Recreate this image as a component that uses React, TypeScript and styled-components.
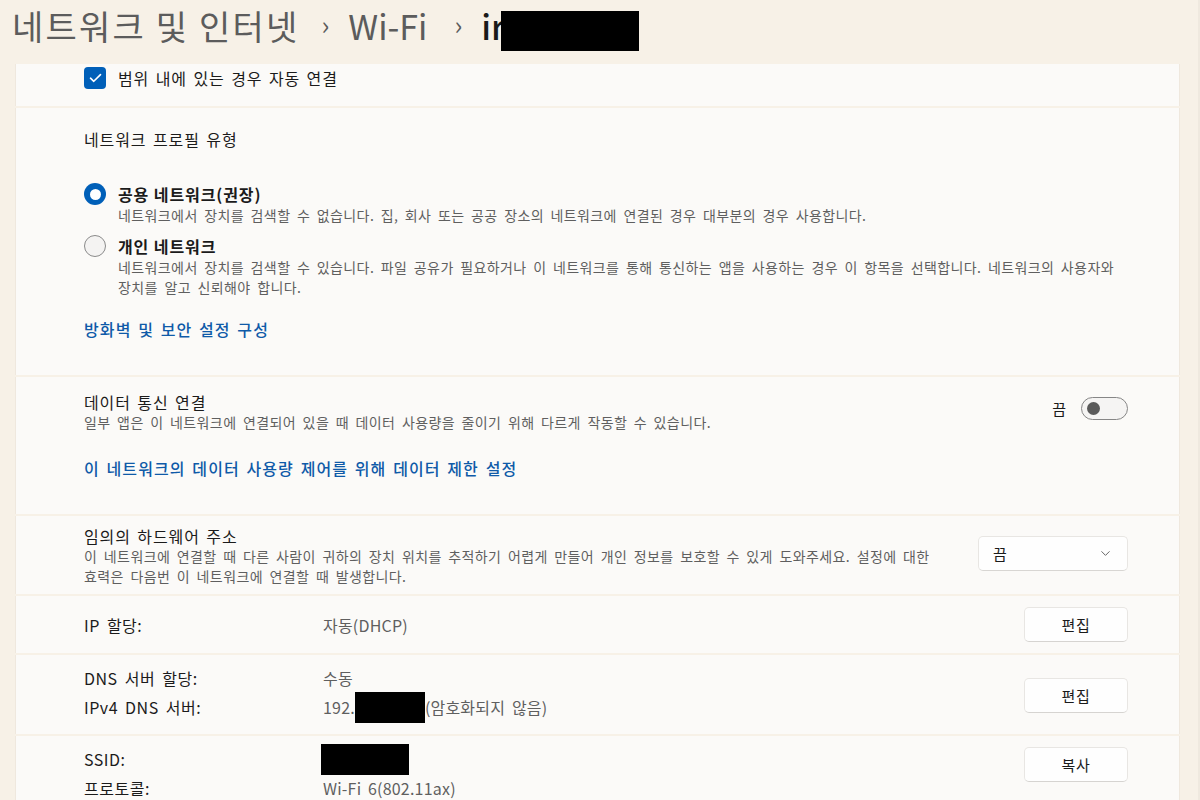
import React from 'react';
import styled, { createGlobalStyle } from 'styled-components';
import { ChevronDown } from 'lucide-react';

// 전역 스타일
const GlobalStyle = createGlobalStyle`
  html, body {
    margin: 0;
    padding: 0;
    background: #f7f1e7;
  }
  body {
    font-family: "Noto Sans CJK KR", "Noto Sans", "Liberation Sans", sans-serif;
    color: #1b1b1b;
  }
`;

const Page = styled.div`
  width: 1200px;
  height: 800px;
  overflow: hidden;
  background: #f7f1e7;
  box-shadow: inset -2px 0 0 #efe9df;
`;

const Header = styled.header`
  height: 64px;
  display: flex;
  align-items: center;
  padding-left: 12px;
  padding-bottom: 14px;
  box-sizing: border-box;
`;

const Crumb = styled.span<{ $current?: boolean; $ls?: number }>`
  font-size: 34px;
  letter-spacing: ${p => p.$ls ?? 0}px;
  color: ${p => (p.$current ? '#1a1a1a' : '#5c5c5c')};
  font-weight: ${p => (p.$current ? 500 : 400)};
  white-space: nowrap;
`;

const CrumbSep = styled.span<{ $ml: number }>`
  font-size: 26px;
  color: #5c5c5c;
  margin: 0 19px 0 ${p => p.$ml}px;
  position: relative;
  top: -2px;
`;

const Redact = styled.span<{ $w: number; $h: number }>`
  display: inline-block;
  width: ${p => p.$w}px;
  height: ${p => p.$h}px;
  background: #000;
  vertical-align: middle;
  flex-shrink: 0;
`;

// 제목 옆의 가림 상자 (제목보다 조금 아래)
const TitleRedact = styled(Redact)`
  margin: 12px 0 0 -4px;
`;

const Card = styled.div`
  margin: 0 20px 0 15px;
  display: flex;
  flex-direction: column;
  gap: 2px;
`;

const Section = styled.section<{ $h: number; $pt?: number }>`
  background: #fbfaf8;
  height: ${p => p.$h}px;
  padding: ${p => p.$pt ?? 0}px 52px 0 69px;
  box-sizing: border-box;
  box-shadow: inset 1px 0 0 #efe8de, inset -1px 0 0 #efe8de;
`;

const CheckRow = styled.label`
  display: flex;
  align-items: center;
  gap: 12px;
  font-size: 16px;
  letter-spacing: 0.9px;
  word-spacing: 2px;
`;

const CheckBox = styled.span`
  width: 22px;
  height: 22px;
  border-radius: 4px;
  background: #005fb8;
  display: flex;
  align-items: center;
  justify-content: center;
`;

const Heading = styled.div`
  font-size: 16px;
  letter-spacing: 0.9px;
  word-spacing: 2px;
  line-height: 20px;
`;

const Desc = styled.div`
  font-size: 14px;
  letter-spacing: 0.4px;
  word-spacing: 3px;
  line-height: 20px;
  color: #5f5f5f;
  word-break: keep-all;
`;

const RadioList = styled.div`
  margin-top: 34px;
  display: flex;
  flex-direction: column;
  gap: 10px;
`;

const RadioItem = styled.div`
  display: grid;
  grid-template-columns: 22px 1fr;
  column-gap: 12px;
`;

const RadioDot = styled.span<{ $on: boolean }>`
  width: 22px;
  height: 22px;
  border-radius: 50%;
  box-sizing: border-box;
  background: ${p => (p.$on ? '#005fb8' : '#f4f3f2')};
  border: ${p => (p.$on ? 'none' : '1px solid #8a8a8a')};
  display: flex;
  align-items: center;
  justify-content: center;
  &::after {
    content: '';
    display: ${p => (p.$on ? 'block' : 'none')};
    width: 11px;
    height: 11px;
    border-radius: 50%;
    background: #fff;
  }
`;

const RadioLabel = styled.div`
  font-size: 16px;
  font-weight: 600;
  letter-spacing: 0.9px;
  line-height: 22px;
`;

const Link = styled.a<{ $mt: number }>`
  display: block;
  margin-top: ${p => p.$mt}px;
  font-size: 16px;
  letter-spacing: 1.1px;
  word-spacing: 2px;
  color: #0f5aa8;
  font-weight: 500;
  text-decoration: none;
  cursor: pointer;
`;

const SplitRow = styled.div`
  display: flex;
  align-items: flex-start;
  justify-content: space-between;
  gap: 24px;
`;

const ToggleWrap = styled.div`
  display: flex;
  align-items: center;
  gap: 15px;
  margin-top: 5px;
  font-size: 15px;
`;

const Toggle = styled.span`
  width: 47px;
  height: 23px;
  border-radius: 12px;
  border: 1px solid #868686;
  background: #f5f4f3;
  box-sizing: border-box;
  display: flex;
  align-items: center;
  padding-left: 5px;
  &::before {
    content: '';
    width: 13px;
    height: 13px;
    border-radius: 50%;
    background: #5a5a5a;
  }
`;

const Select = styled.div`
  width: 150px;
  height: 35px;
  flex-shrink: 0;
  margin-top: 10px;
  background: #fefefe;
  border: 1px solid #e8e6e3;
  border-bottom-color: #d8d6d3;
  border-radius: 5px;
  box-sizing: border-box;
  display: flex;
  align-items: center;
  justify-content: space-between;
  padding: 0 14px;
  font-size: 15px;
  color: #1b1b1b;
`;

const InfoRow = styled.div<{ $align?: string }>`
  display: grid;
  grid-template-columns: 239px 1fr 104px;
  align-items: ${p => p.$align ?? 'center'};
  height: 100%;
`;

const InfoKeys = styled.div`
  display: flex;
  flex-direction: column;
  gap: 9px;
  font-size: 16px;
  letter-spacing: 0.5px;
  word-spacing: 3px;
  line-height: 20px;
`;

const InfoValues = styled.div`
  display: flex;
  flex-direction: column;
  gap: 9px;
  font-size: 16px;
  letter-spacing: 0.2px;
  word-spacing: 3px;
  line-height: 20px;
  color: #5f5f5f;
`;

const ValueLine = styled.div`
  display: flex;
  align-items: center;
  height: 20px;
  white-space: nowrap;
`;

const Button = styled.button<{ $mt?: number }>`
  width: 104px;
  height: 35px;
  align-self: ${p => (p.$mt !== undefined ? 'start' : 'center')};
  margin-top: ${p => p.$mt ?? 0}px;
  background: #fefefe;
  border: 1px solid #e8e6e3;
  border-bottom-color: #d6d4d1;
  border-radius: 5px;
  font-family: inherit;
  font-size: 15px;
  letter-spacing: 0.8px;
  color: #1b1b1b;
  cursor: pointer;
`;

const profiles = [
  {
    label: '공용 네트워크(권장)',
    on: true,
    desc: '네트워크에서 장치를 검색할 수 없습니다. 집, 회사 또는 공공 장소의 네트워크에 연결된 경우 대부분의 경우 사용합니다.',
  },
  {
    label: '개인 네트워크',
    on: false,
    desc: '네트워크에서 장치를 검색할 수 있습니다. 파일 공유가 필요하거나 이 네트워크를 통해 통신하는 앱을 사용하는 경우 이 항목을 선택합니다. 네트워크의 사용자와 장치를 알고 신뢰해야 합니다.',
  },
];

export default function App() {
  return (
    <Page>
      <GlobalStyle />
      <Header>
        <Crumb $ls={2.2}>네트워크 및 인터넷</Crumb>
        <CrumbSep $ml={22}>›</CrumbSep>
        <Crumb>Wi-Fi</Crumb>
        <CrumbSep $ml={27}>›</CrumbSep>
        <Crumb $current>ir</Crumb>
        <TitleRedact $w={138} $h={40} />
      </Header>

      <Card>
        {/* 자동 연결 */}
        <Section $h={42} $pt={2}>
          <CheckRow>
            <CheckBox>
              <svg width="13" height="10" viewBox="0 0 13 10" fill="none">
                <path d="M1.5 5.2 L4.8 8.3 L11.5 1.6" stroke="#fff" strokeWidth="1.6" strokeLinecap="round" strokeLinejoin="round" />
              </svg>
            </CheckBox>
            범위 내에 있는 경우 자동 연결
          </CheckRow>
        </Section>

        {/* 네트워크 프로필 유형 */}
        <Section $h={267} $pt={21}>
          <Heading>네트워크 프로필 유형</Heading>
          <RadioList>
            {profiles.map(p => (
              <RadioItem key={p.label}>
                <RadioDot $on={p.on} />
                <div>
                  <RadioLabel>{p.label}</RadioLabel>
                  <Desc>{p.desc}</Desc>
                </div>
              </RadioItem>
            ))}
          </RadioList>
          <Link $mt={20}>방화벽 및 보안 설정 구성</Link>
        </Section>

        {/* 데이터 통신 연결 */}
        <Section $h={137} $pt={15}>
          <SplitRow>
            <div>
              <Heading>데이터 통신 연결</Heading>
              <Desc>일부 앱은 이 네트워크에 연결되어 있을 때 데이터 사용량을 줄이기 위해 다르게 작동할 수 있습니다.</Desc>
            </div>
            <ToggleWrap>
              끔
              <Toggle />
            </ToggleWrap>
          </SplitRow>
          <Link $mt={24}>이 네트워크의 데이터 사용량 제어를 위해 데이터 제한 설정</Link>
        </Section>

        {/* 임의의 하드웨어 주소 */}
        <Section $h={78} $pt={10}>
          <SplitRow>
            <div style={{ maxWidth: 870 }}>
              <Heading>임의의 하드웨어 주소</Heading>
              <Desc>이 네트워크에 연결할 때 다른 사람이 귀하의 장치 위치를 추적하기 어렵게 만들어 개인 정보를 보호할 수 있게 도와주세요. 설정에 대한 효력은 다음번 이 네트워크에 연결할 때 발생합니다.</Desc>
            </div>
            <Select>
              끔
              <ChevronDown size={15} strokeWidth={1.5} color="#5c5c5c" />
            </Select>
          </SplitRow>
        </Section>

        {/* IP 할당 */}
        <Section $h={57}>
          <InfoRow>
            <InfoKeys>
              <div>IP 할당:</div>
            </InfoKeys>
            <InfoValues>
              <ValueLine>자동(DHCP)</ValueLine>
            </InfoValues>
            <Button>편집</Button>
          </InfoRow>
        </Section>

        {/* DNS */}
        <Section $h={79} $pt={13}>
          <InfoRow $align="start">
            <InfoKeys>
              <div>DNS 서버 할당:</div>
              <div>IPv4 DNS 서버:</div>
            </InfoKeys>
            <InfoValues>
              <ValueLine>수동</ValueLine>
              <ValueLine>
                192.
                <Redact $w={70} $h={31} />
                (암호화되지 않음)
              </ValueLine>
            </InfoValues>
            <Button $mt={10}>편집</Button>
          </InfoRow>
        </Section>

        {/* SSID */}
        <Section $h={80} $pt={13}>
          <InfoRow $align="start">
            <InfoKeys>
              <div>SSID:</div>
              <div>프로토콜:</div>
            </InfoKeys>
            <InfoValues>
              <ValueLine>
                <Redact $w={88} $h={31} style={{ marginLeft: -2 }} />
              </ValueLine>
              <ValueLine>Wi-Fi 6(802.11ax)</ValueLine>
            </InfoValues>
            <Button $mt={-2}>복사</Button>
          </InfoRow>
        </Section>
      </Card>
    </Page>
  );
}
